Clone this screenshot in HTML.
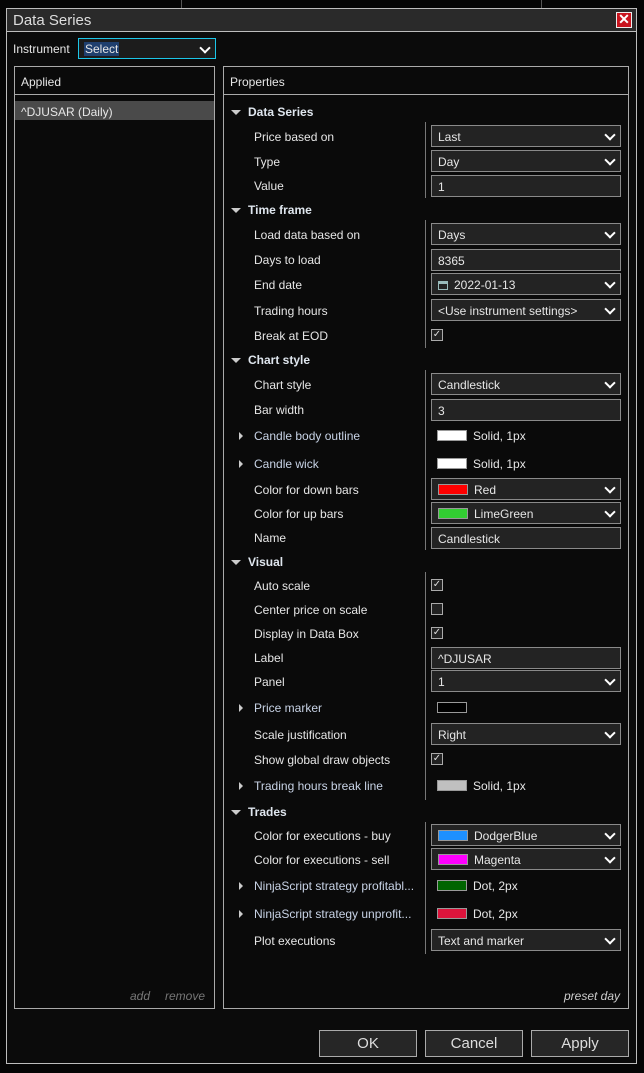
<!DOCTYPE html>
<html><head><meta charset="utf-8"><style>
*{box-sizing:border-box;margin:0;padding:0}
body{width:644px;height:1073px;background:#050505;font-family:"Liberation Sans",sans-serif;font-size:12px;color:#e6e6e6;position:relative;overflow:hidden}
.a{position:absolute}
.win{left:6px;top:8px;width:631px;height:1056px;border:1px solid #bdbdbd;background:#0b0b0b}
.title{left:7px;top:9px;width:629px;height:23px;background:#2a2a2a;border-bottom:1px solid #bdbdbd;font-size:15px;color:#ddd;padding:3px 0 0 6px}
.close{left:616px;top:12px;width:16px;height:16px;background:#c8141e;border:1px solid #eee;color:#fff;font-size:14px;font-weight:bold;line-height:13px;text-align:center}
.panel{border:1px solid #aaa;background:#0a0a0a}
.l{position:absolute;left:254px;transform:translateY(-50%);white-space:nowrap;margin-top:1px}
.c{position:absolute;left:248px;transform:translateY(-50%);font-weight:bold;color:#dfe6ee;margin-top:1px}
.c:before{content:"";position:absolute;left:-17px;top:5px;border-left:5px solid transparent;border-right:5px solid transparent;border-top:5px solid #ccc}
.e{color:#c8d3e6}
.e:before{content:"";position:absolute;left:-15px;top:3px;border-top:4px solid transparent;border-bottom:4px solid transparent;border-left:4px solid #ccc}
.f{position:absolute;left:431px;width:190px;height:22px;border:1px solid #8a8a8a;background:#232323;padding:4px 0 0 6px;white-space:nowrap}
.dd:after{content:"";position:absolute;right:6px;top:5px;width:6px;height:6px;border-right:2px solid #fff;border-bottom:2px solid #fff;transform:rotate(45deg)}
.sw{display:inline-block;width:30px;height:11px;vertical-align:-1px;margin-right:6px;border:1px solid #999}
.cb{position:absolute;left:431px;width:12px;height:12px;border:1px solid #aaa;background:#222;color:#ddd;font-size:10px;line-height:10px;text-align:center}
.v{position:absolute;left:437px;transform:translateY(-50%);white-space:nowrap;margin-top:1px}
.btn{position:absolute;top:1030px;width:98px;height:27px;border:1px solid #aaa;background:#262626;text-align:center;font-size:15px;line-height:26px;color:#ddd}
</style></head><body>
<div class="a" style="left:181px;top:0;width:1px;height:8px;background:#555"></div>
<div class="a" style="left:541px;top:0;width:1px;height:8px;background:#555"></div>
<div class="a win"></div>
<div class="a title">Data Series</div>
<div class="a close">✕</div>
<div class="a" style="left:13px;top:42px;font-size:12px">Instrument</div>
<div class="a dd" style="left:78px;top:38px;width:138px;height:21px;border:1px solid #1cc6e8;background:#1c1c1c"><span style="position:absolute;left:5px;top:3px;background:#1f3f6e;padding:0 1px">Select</span></div>
<div class="a panel" style="left:14px;top:66px;width:201px;height:943px"></div>
<div class="a" style="left:15px;top:94px;width:199px;height:1px;background:#aaa"></div>
<div class="a" style="left:21px;top:75px">Applied</div>
<div class="a" style="left:15px;top:101px;width:199px;height:19px;background:#4a4a4a"></div>
<div class="a" style="left:21px;top:105px">^DJUSAR (Daily)</div>
<div class="a" style="left:130px;top:989px;color:#777;font-style:italic">add</div>
<div class="a" style="left:165px;top:989px;color:#777;font-style:italic">remove</div>
<div class="a panel" style="left:223px;top:66px;width:406px;height:943px"></div>
<div class="a" style="left:224px;top:94px;width:404px;height:1px;background:#aaa"></div>
<div class="a" style="left:230px;top:75px">Properties</div>
<div class="a" style="left:564px;top:989px;color:#ccc;font-style:italic">preset day</div>
<div class="a" style="left:425px;top:122px;width:1px;height:76px;background:#777"></div>
<div class="a" style="left:425px;top:220px;width:1px;height:128px;background:#777"></div>
<div class="a" style="left:425px;top:370px;width:1px;height:180px;background:#777"></div>
<div class="a" style="left:425px;top:572px;width:1px;height:228px;background:#777"></div>
<div class="a" style="left:425px;top:822px;width:1px;height:132px;background:#777"></div>

<div class="c" style="top:111px">Data Series</div>
<div class="l" style="top:136px">Price based on</div><div class="f dd" style="top:125px">Last</div>
<div class="l" style="top:161px">Type</div><div class="f dd" style="top:150px">Day</div>
<div class="l" style="top:185px">Value</div><div class="f" style="top:175px">1</div>
<div class="c" style="top:209px">Time frame</div>
<div class="l" style="top:234px">Load data based on</div><div class="f dd" style="top:223px">Days</div>
<div class="l" style="top:259px">Days to load</div><div class="f" style="top:249px">8365</div>
<div class="l" style="top:284px">End date</div><div class="f dd" style="top:273px"><span style="display:inline-block;width:10px;height:9px;border:1px solid #9bb;border-top:3px solid #9bb;margin-right:6px;vertical-align:-1px"></span>2022-01-13</div>
<div class="l" style="top:310px">Trading hours</div><div class="f dd" style="top:299px">&lt;Use instrument settings&gt;</div>
<div class="l" style="top:335px">Break at EOD</div><div class="cb" style="top:329px">✓</div>
<div class="c" style="top:359px">Chart style</div>
<div class="l" style="top:384px">Chart style</div><div class="f dd" style="top:373px">Candlestick</div>
<div class="l" style="top:409px">Bar width</div><div class="f" style="top:399px">3</div>
<div class="l e" style="top:435px">Candle body outline</div><div class="v" style="top:435px"><span class="sw" style="background:#fff"></span>Solid, 1px</div>
<div class="l e" style="top:463px">Candle wick</div><div class="v" style="top:463px"><span class="sw" style="background:#fff"></span>Solid, 1px</div>
<div class="l" style="top:489px">Color for down bars</div><div class="f dd" style="top:478px"><span class="sw" style="background:#f00"></span>Red</div>
<div class="l" style="top:513px">Color for up bars</div><div class="f dd" style="top:502px"><span class="sw" style="background:#32cd32"></span>LimeGreen</div>
<div class="l" style="top:537px">Name</div><div class="f" style="top:527px">Candlestick</div>
<div class="c" style="top:561px">Visual</div>
<div class="l" style="top:585px">Auto scale</div><div class="cb" style="top:579px">✓</div>
<div class="l" style="top:609px">Center price on scale</div><div class="cb" style="top:603px"></div>
<div class="l" style="top:633px">Display in Data Box</div><div class="cb" style="top:627px">✓</div>
<div class="l" style="top:657px">Label</div><div class="f" style="top:647px">^DJUSAR</div>
<div class="l" style="top:681px">Panel</div><div class="f dd" style="top:670px">1</div>
<div class="l e" style="top:707px">Price marker</div><div class="v" style="top:707px"><span class="sw" style="background:#000"></span></div>
<div class="l" style="top:734px">Scale justification</div><div class="f dd" style="top:723px">Right</div>
<div class="l" style="top:759px">Show global draw objects</div><div class="cb" style="top:753px">✓</div>
<div class="l e" style="top:785px">Trading hours break line</div><div class="v" style="top:785px"><span class="sw" style="background:#c0c0c0"></span>Solid, 1px</div>
<div class="c" style="top:811px">Trades</div>
<div class="l" style="top:835px">Color for executions - buy</div><div class="f dd" style="top:824px"><span class="sw" style="background:#1e90ff"></span>DodgerBlue</div>
<div class="l" style="top:859px">Color for executions - sell</div><div class="f dd" style="top:848px"><span class="sw" style="background:#f0f"></span>Magenta</div>
<div class="l e" style="top:885px">NinjaScript strategy profitabl...</div><div class="v" style="top:885px"><span class="sw" style="background:#006400"></span>Dot, 2px</div>
<div class="l e" style="top:913px">NinjaScript strategy unprofit...</div><div class="v" style="top:913px"><span class="sw" style="background:#dc143c"></span>Dot, 2px</div>
<div class="l" style="top:940px">Plot executions</div><div class="f dd" style="top:929px">Text and marker</div>

<div class="btn" style="left:319px">OK</div>
<div class="btn" style="left:425px">Cancel</div>
<div class="btn" style="left:531px">Apply</div>
</body></html>
